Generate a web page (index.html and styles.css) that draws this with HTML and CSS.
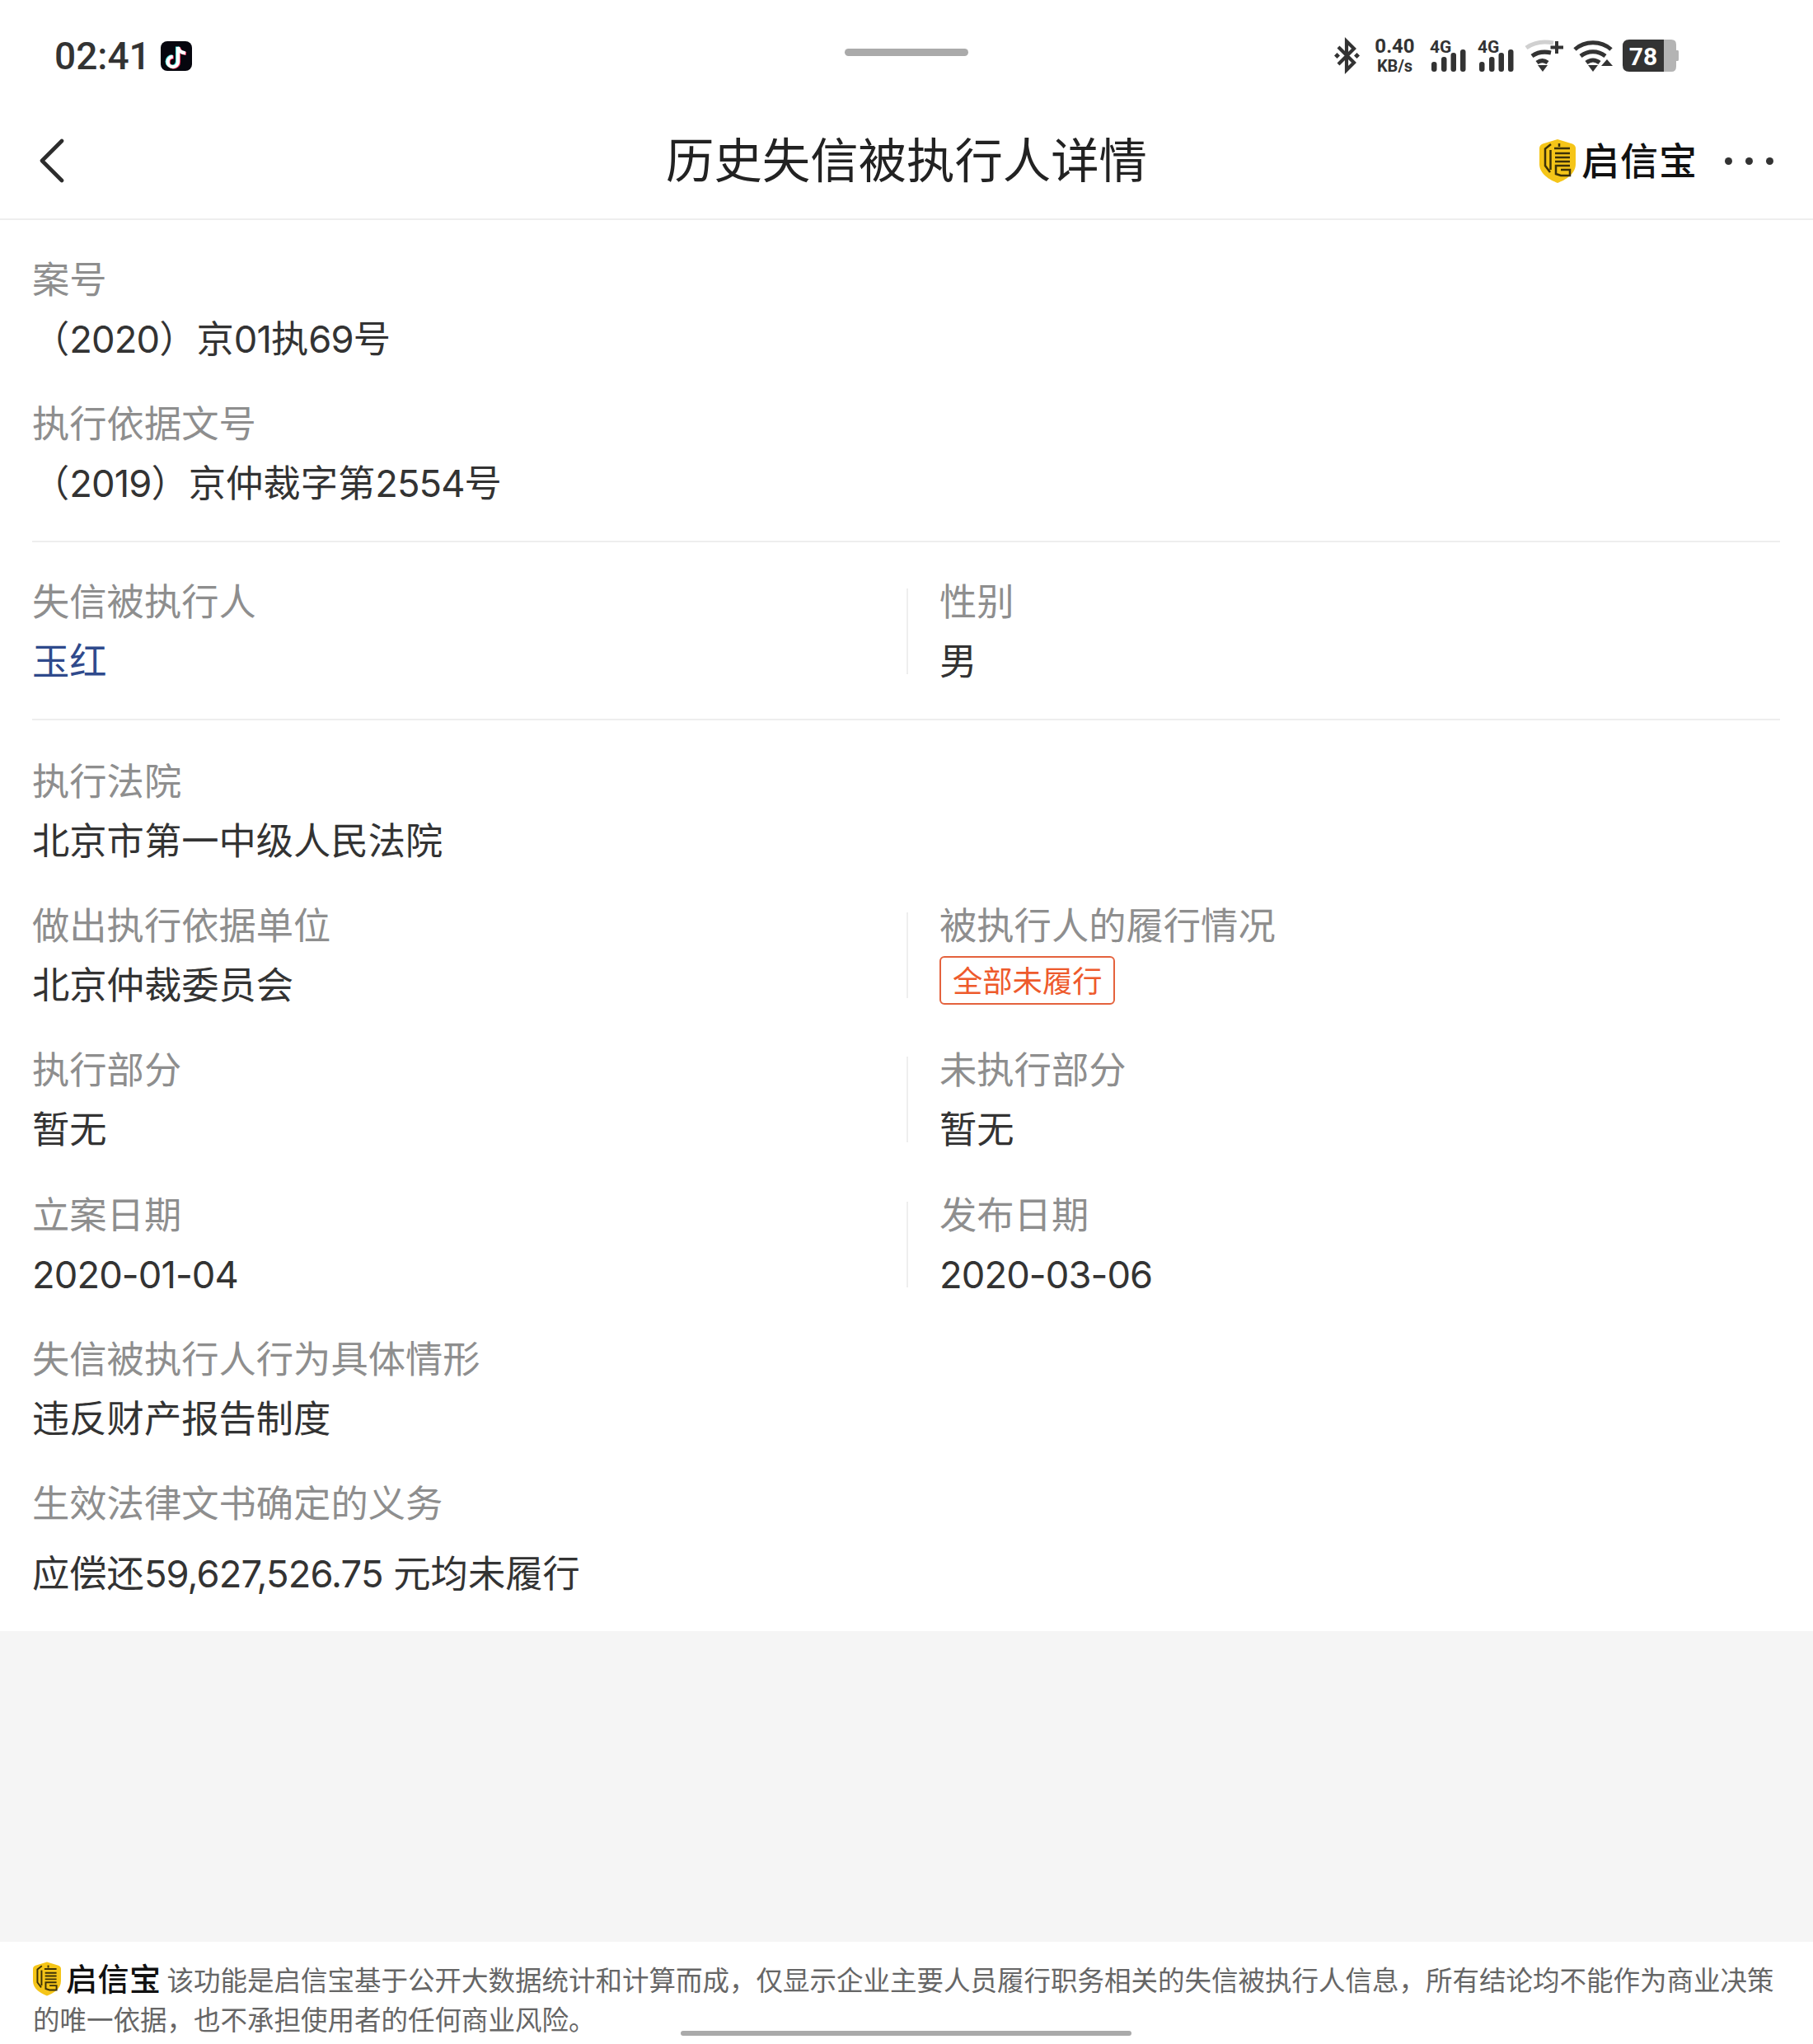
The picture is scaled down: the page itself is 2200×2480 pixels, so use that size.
FILE: index.html
```html
<!DOCTYPE html>
<html lang="zh-CN">
<head>
<meta charset="utf-8">
<title>历史失信被执行人详情</title>
<link rel="stylesheet" href="styles.css">
</head>
<body>
<svg class="defs" width="0" height="0" aria-hidden="true">
  <symbol id="shield" viewBox="0 0 44 53">
    <path d="M22 0 L40 5.5 Q44 7 44 11 V30 C44 42 32 49 22 53 C12 49 0 42 0 30 V11 Q0 7 4 5.5Z" fill="#f5c518"/>
    <g fill="none" stroke="#3d3208" stroke-width="2.5">
      <path d="M14 6 L7 11.5 V32 L13 40"/>
      <path d="M13.5 13 V37"/>
      <path d="M24 5 V9 M18 11 H37 M19 17 H37 M19 22 H37 M19 27 H37"/>
      <path d="M37 32 H20 V42 L26 44 H37 V37 H26"/>
    </g>
  </symbol>
</svg>

<header class="status">
  <div class="status-left">
    <span class="clock">02:41</span>
    <svg class="tiktok" viewBox="0 0 38 36">
      <rect width="38" height="36" rx="8" fill="#06060e"/>
      <g fill="none" stroke-width="4.2" stroke-linecap="butt">
        <path d="M20 6.500 V24.500 a6.200 6.200 0 1 1 -6.200 -6.200 M20 6.500 c0.500 4 4 7 9 7.500" stroke="#3fe6e6"/>
        <path d="M22 7.500 V25.500 a6.200 6.200 0 1 1 -6.200 -6.200 M22 7.500 c0.500 4 4 7 9 7.500" stroke="#f0305a"/>
        <path d="M21 7 V25 a6.200 6.200 0 1 1 -6.200 -6.200 M21 7 c0.500 4 4 7 9 7.500" stroke="#ffffff"/>
      </g>
    </svg>
  </div>
  <div class="pill"></div>
  <svg class="status-icons" viewBox="0 0 420 39">
    <g fill="none" stroke="#333" stroke-width="4.2">
      <path d="M7 9 L26 28 L17 37 V2 L26 11 L7 30"/>
    </g>
    <path d="M2 19.5 l3.5 -3.500 3.500 3.500 -3.500 3.500Z M26 19.500 l3.500 -3.500 3.500 3.500 -3.500 3.500Z" fill="#333"/>
    <text class="si-speed" x="75.500" y="16" text-anchor="middle">0.40</text>
    <text class="si-unit" x="75.500" y="39" text-anchor="middle">KB/s</text>
    <text class="si-net" x="118" y="16">4G</text>
    <g fill="#333">
      <rect x="120" y="27" width="6.500" height="12" rx="3"/>
      <rect x="132" y="21" width="6.500" height="18" rx="3"/>
      <rect x="143.500" y="16" width="6.500" height="23" rx="3"/>
      <rect x="155" y="12" width="6.500" height="27" rx="3"/>
    </g>
    <text class="si-net" x="176" y="16">4G</text>
    <g fill="#333">
      <rect x="178" y="27" width="6.500" height="12" rx="3"/>
      <rect x="190" y="21" width="6.500" height="18" rx="3"/>
      <rect x="201.500" y="16" width="6.500" height="23" rx="3"/>
      <rect x="213" y="12" width="6.500" height="27" rx="3"/>
    </g>
    <g fill="none" stroke-width="5">
      <path d="M235 10 C246 2 258 2 268 4" stroke="#d0d0d0"/>
      <path d="M242 20 C249 15 256 14 265 16" stroke="#333"/>
      <path d="M248 28 C252 25 257 25 261 28" stroke="#333"/>
    </g>
    <path d="M249 31 H261 L255 39Z" fill="#333"/>
    <path d="M272 2 V17 M264.500 9.500 H280" stroke="#333" stroke-width="4" fill="none"/>
    <g fill="none" stroke="#333" stroke-width="5">
      <path d="M294 12 C306 1 326 1 338 12"/>
      <path d="M301 20 C310 13 322 13 331 20"/>
      <path d="M308 28 C313 24 319 24 324 28"/>
    </g>
    <path d="M310 31 H322 L316 39Z M333 24 L340 32 H326Z" fill="#333"/>
    <path d="M392 0 H411 Q417 0 417 6 V33 Q417 39 411 39 H392Z M417 13 h2 q1 0 1 2 v9 q0 2 -1 2 h-2Z" fill="#b4b4b4"/>
    <path d="M360 0 H402 V39 H360 Q352 39 352 31 V8 Q352 0 360 0Z" fill="#333"/>
    <text class="si-batt" x="377" y="31" text-anchor="middle">78</text>
  </svg>
</header>

<nav class="nav">
  <svg class="back" viewBox="0 0 32 54"><path d="M28 3 L4 27 L28 51" fill="none" stroke="#2c2c2c" stroke-width="4.600" stroke-linecap="round" stroke-linejoin="round"/></svg>
  <h1 class="title">历史失信被执行人详情</h1>
  <div class="nav-right">
    <div class="brand">
      <svg class="shield"><use href="#shield"/></svg>
      <span class="brand-text">启信宝</span>
    </div>
    <div class="dots"><i></i><i></i><i></i></div>
  </div>
</nav>

<main class="detail">
  <section class="group group-first">
    <div class="row">
      <div class="field"><div class="label">案号</div><div class="value">（<span class="num">2020</span>）京<span class="num">01</span>执<span class="num">69</span>号</div></div>
    </div>
    <div class="row">
      <div class="field"><div class="label">执行依据文号</div><div class="value">（<span class="num">2019</span>）京仲裁字第<span class="num">2554</span>号</div></div>
    </div>
  </section>

  <section class="group group-second">
    <div class="row cols">
      <div class="field"><div class="label">失信被执行人</div><div class="value link">玉红</div></div>
      <div class="field side"><div class="label">性别</div><div class="value">男</div></div>
    </div>
  </section>

  <section class="group group-last">
    <div class="row">
      <div class="field"><div class="label">执行法院</div><div class="value">北京市第一中级人民法院</div></div>
    </div>
    <div class="row cols">
      <div class="field"><div class="label">做出执行依据单位</div><div class="value">北京仲裁委员会</div></div>
      <div class="field side"><div class="label">被执行人的履行情况</div><div class="tag">全部未履行</div></div>
    </div>
    <div class="row cols">
      <div class="field"><div class="label">执行部分</div><div class="value">暂无</div></div>
      <div class="field side"><div class="label">未执行部分</div><div class="value">暂无</div></div>
    </div>
    <div class="row cols">
      <div class="field"><div class="label">立案日期</div><div class="value"><span class="num">2020-01-04</span></div></div>
      <div class="field side"><div class="label">发布日期</div><div class="value"><span class="num">2020-03-06</span></div></div>
    </div>
    <div class="row">
      <div class="field"><div class="label">失信被执行人行为具体情形</div><div class="value">违反财产报告制度</div></div>
    </div>
    <div class="row">
      <div class="field field-tall"><div class="label">生效法律文书确定的义务</div><div class="value">应偿还<span class="num">59,627,526.75</span> 元均未履行</div></div>
    </div>
  </section>
</main>

<div class="filler"></div>

<footer class="foot">
  <span class="foot-brand"><svg class="foot-shield"><use href="#shield"/></svg><span class="foot-brand-text">启信宝</span></span>该功能是启信宝基于公开大数据统计和计算而成，仅显示企业主要人员履行职务相关的失信被执行人信息，所有结论均不能作为商业决策的唯一依据，也不承担使用者的任何商业风险。
  <div class="home"></div>
</footer>
</body>
</html>
```

FILE: styles.css
```css
* { box-sizing: border-box; }
html, body { margin: 0; padding: 0; }
body {
  width: 2200px;
  height: 2480px;
  background: #fff;
  display: flex;
  flex-direction: column;
  font-family: "Inter", "Noto Sans CJK SC", sans-serif;
  color: #333;
  overflow: hidden;
}
.defs { position: absolute; }

.status {
  position: relative;
  height: 130px;
  flex: none;
  display: flex;
  justify-content: space-between;
  align-items: flex-start;
  padding: 48px 163px 0 66px;
}
.status-left { display: flex; align-items: center; height: 39px; }
.clock {
  font-family: "Roboto", sans-serif;
  font-size: 46px;
  font-weight: 500;
  line-height: 44px;
  color: #333;
  width: 129px;
}
.tiktok { width: 38px; height: 36px; }
.pill {
  position: absolute;
  left: 1025px;
  top: 59px;
  width: 150px;
  height: 9px;
  border-radius: 5px;
  background: #aaa;
}
.status-icons { width: 420px; height: 39px; overflow: visible; }
.si-speed { font: 700 24px "Roboto", sans-serif; fill: #333; }
.si-unit { font: 700 20px "Roboto", sans-serif; fill: #333; }
.si-net { font: 700 21px "Roboto", sans-serif; fill: #333; }
.si-batt { font: 700 30px "Roboto", sans-serif; fill: #fff; }

.nav {
  position: relative;
  height: 137px;
  flex: none;
  display: flex;
  align-items: center;
  justify-content: center;
  border-bottom: 2px solid #eee;
  padding-bottom: 6px;
}
.back {
  position: absolute;
  left: 47px;
  top: 38px;
  width: 32px;
  height: 54px;
}
.title {
  margin: 0;
  font-size: 58.400px;
  font-weight: 400;
  line-height: 80px;
  color: #222;
}
.nav-right {
  position: absolute;
  right: 48px;
  top: 39px;
  height: 53px;
  display: flex;
  align-items: center;
  gap: 33px;
}
.brand { display: flex; align-items: center; gap: 7px; }
.shield { width: 44px; height: 53px; }
.brand-text {
  font-size: 46px;
  font-weight: 500;
  line-height: 53px;
  color: #111;
  letter-spacing: 1px;
}
.dots { display: flex; gap: 16px; }
.dots i {
  display: block;
  width: 9px;
  height: 9px;
  border-radius: 50%;
  background: #333;
}

.detail { flex: none; }
.group {
  margin: 0 40px 0 39px;
  border-bottom: 2px solid #eee;
  display: flex;
  flex-direction: column;
  gap: 71.300px;
}
.group-first { padding: 56px 0 53.500px; }
.group-second { padding: 56px 0 54.500px; }
.group-last { border-bottom: 0; padding: 57.500px 0 54px; }
.row { display: flex; }
.field {
  height: 104px;
  flex: 1;
  display: flex;
  flex-direction: column;
  justify-content: space-between;
}
.field-tall { height: 117px; }
.cols .field { flex: none; width: 1061px; }
.cols .field.side {
  width: auto;
  flex: 1;
  border-left: 2px solid #eee;
  padding-left: 38px;
}
.label {
  font-size: 45.300px;
  line-height: 34px;
  color: #8e8e8e;
}
.value {
  font-size: 45.300px;
  line-height: 30px;
  color: #333;
}
.num { letter-spacing: -0.900px; }
.link { color: #2f4a8c; }
.tag {
  align-self: flex-start;
  height: 59px;
  margin-top: -4px;
  margin-bottom: -8px;
  padding: 0 14px;
  border: 2px solid #e4623d;
  border-radius: 6px;
  font-size: 36.300px;
  line-height: 58px;
  color: #ee5a2c;
}

.filler { flex: 1; background: #f5f5f5; }

.foot {
  position: relative;
  height: 124px;
  flex: none;
  padding: 24px 40px 0;
  font-size: 32.500px;
  line-height: 48px;
  color: #666;
}
.foot-brand {
  display: inline-flex;
  align-items: center;
  gap: 6px;
  height: 42px;
  vertical-align: middle;
  margin-right: 7px;
  position: relative;
  top: -5px;
}
.foot-shield { width: 34px; height: 42px; }
.foot-brand-text { font-size: 38px; font-weight: 500; line-height: 42px; color: #111; letter-spacing: 0.500px; }
.home {
  position: absolute;
  left: 826px;
  bottom: 10px;
  width: 547px;
  height: 6px;
  border-radius: 3px;
  background: #aaa;
}
```
